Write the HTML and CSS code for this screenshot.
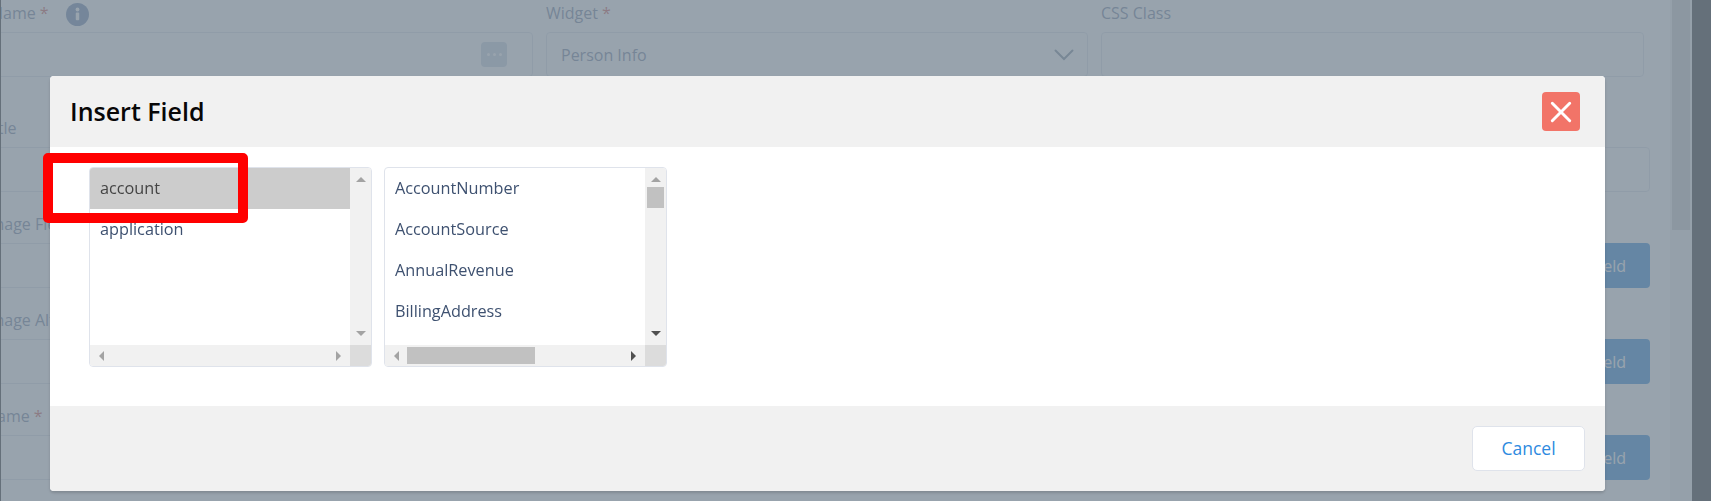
FILE: index.html
```html
<!DOCTYPE html>
<html lang="en">
<head>
    <meta charset="UTF-8">
    <meta name="viewport" content="width=device-width, initial-scale=1.0">
    <title>Insert Field</title>
    <link rel="stylesheet" href="styles.css">
</head>
<body>
    <div class="page">
        <!-- form behind the dialog -->
        <div class="form">
            <div class="top-row">
                <div class="field">
                    <div class="label">Name <span class="req">*</span>
                        <svg class="info" viewBox="0 0 24 24"><circle cx="12" cy="12" r="12" fill="#4f6f9f"/><rect x="10.2" y="10" width="3.6" height="8" rx="1" fill="#fff"/><circle cx="12" cy="6.8" r="2" fill="#fff"/></svg>
                    </div>
                    <div class="input">
                        <span class="more"><i></i><i></i><i></i></span>
                    </div>
                </div>
                <div class="field">
                    <div class="label">Widget <span class="req">*</span></div>
                    <div class="input">
                        <span class="value">Person Info</span>
                        <svg class="chevron" viewBox="0 0 20 12"><path d="M1.5 1.5 L10 10 L18.5 1.5" fill="none" stroke="#5f7389" stroke-width="2" stroke-linecap="round"/></svg>
                    </div>
                </div>
                <div class="field">
                    <div class="label">CSS Class</div>
                    <div class="input"></div>
                </div>
            </div>
            <div class="rows">
                <div class="row">
                    <div class="label">Title</div>
                    <div class="input"></div>
                </div>
                <div class="row">
                    <div class="label">Image Field</div>
                    <div class="input-line">
                        <div class="input"></div>
                        <button class="blue-btn">Insert Field</button>
                    </div>
                </div>
                <div class="row">
                    <div class="label">Image Alt</div>
                    <div class="input-line">
                        <div class="input"></div>
                        <button class="blue-btn">Insert Field</button>
                    </div>
                </div>
                <div class="row">
                    <div class="label">Name <span class="req">*</span></div>
                    <div class="input-line">
                        <div class="input"></div>
                        <button class="blue-btn">Insert Field</button>
                    </div>
                </div>
            </div>
        </div>
        <div class="page-scroll"><div class="page-thumb"></div></div>
        <div class="page-edge"></div>
    </div>

    <div class="backdrop"></div>

    <!-- dialog -->
    <div class="modal">
        <div class="modal-head">
            <h2 class="modal-title">Insert Field</h2>
            <button class="close-btn">
                <svg viewBox="0 0 24 24"><path d="M2.5 2.5 L21.5 21.5 M21.5 2.5 L2.5 21.5" fill="none" stroke="#fff" stroke-width="3.2" stroke-linecap="round"/></svg>
            </button>
        </div>
        <div class="modal-body">
            <div class="list">
                <div class="list-items">
                    <div class="item selected">account</div>
                    <div class="item">application</div>
                </div>
                <div class="vbar">
                    <span class="arrow up off"></span>
                    <span class="arrow down off"></span>
                </div>
                <div class="hbar">
                    <span class="arrow left off"></span>
                    <span class="arrow right off"></span>
                </div>
                <div class="corner"></div>
            </div>
            <div class="list">
                <div class="list-items">
                    <div class="item">AccountNumber</div>
                    <div class="item">AccountSource</div>
                    <div class="item">AnnualRevenue</div>
                    <div class="item">BillingAddress</div>
                </div>
                <div class="vbar">
                    <span class="arrow up off"></span>
                    <span class="vthumb"></span>
                    <span class="arrow down"></span>
                </div>
                <div class="hbar">
                    <span class="arrow left off"></span>
                    <span class="hthumb"></span>
                    <span class="arrow right"></span>
                </div>
                <div class="corner"></div>
            </div>
        </div>
        <div class="modal-foot">
            <button class="cancel-btn">Cancel</button>
        </div>
    </div>

    <!-- red annotation round the first row -->
    <div class="marker"></div>
</body>
</html>
```

FILE: styles.css
```css
* {
    margin: 0;
    padding: 0;
    box-sizing: border-box;
    font-family: "Open Sans", "Noto Sans", sans-serif;
}
body {
    width: 1711px;
    height: 501px;
    background: white;
    overflow: hidden;
}
.page {
    display: flex;
    height: 501px;
    border-left: 1px solid black;
    overflow: hidden;
}
.form {
    flex: 1;
    min-width: 0;
    padding-top: 3px;
    overflow: hidden;
}
.top-row {
    display: grid;
    grid-template-columns: 542px 542px 543px;
    gap: 13px;
    margin-left: -10px;
}
.rows {
    display: flex;
    flex-direction: column;
    gap: 22px;
    margin: 41px 20px 0 -16px;
}
.label {
    display: flex;
    align-items: center;
    gap: 4px;
    height: 20px;
    margin-bottom: 9px;
    font-size: 16px;
    line-height: 20px;
    color: #54698d;
}
.req {
    color: #c23934;
}
.info {
    width: 23px;
    height: 23px;
    margin-left: 13px;
    position: relative;
    top: 1px;
}
.input {
    display: flex;
    align-items: center;
    justify-content: space-between;
    flex: 1;
    height: 45px;
    padding: 0 14px;
    border: 1px solid #d8dde6;
    border-radius: 4px;
}
.value {
    font-size: 16px;
    color: #54698d;
}
.chevron {
    width: 20px;
    height: 12px;
    margin: 0 -1px 0 auto;
}
.more {
    display: flex;
    align-items: center;
    justify-content: center;
    gap: 3px;
    width: 26px;
    height: 25px;
    margin-left: auto;
    margin-right: 11px;
    background: #bccadb;
    border-radius: 4px;
}
.more i {
    width: 3px;
    height: 3px;
    background: white;
    border-radius: 50%;
}
.input-line {
    display: flex;
}
.blue-btn {
    width: 140px;
    height: 45px;
    padding-right: 24px;
    text-align: right;
    font-size: 16px;
    color: white;
    background: #0070d2;
    border: none;
    border-radius: 4px;
}
.page-scroll {
    width: 22px;
    padding: 0 2px;
    background: #f1f1f1;
}
.page-thumb {
    height: 230px;
    background: #c1c1c1;
}
.page-edge {
    width: 19px;
    background: black;
}
.backdrop {
    position: fixed;
    top: 0;
    left: 0;
    width: 100%;
    height: 100%;
    background: rgba(126, 140, 153, 0.8);
}
/* dialog */
.modal {
    position: fixed;
    top: 76px;
    left: 50px;
    width: 1555px;
    height: 415px;
    display: flex;
    flex-direction: column;
    background: white;
    border-radius: 4px;
    box-shadow: 0 2px 3px rgba(0, 0, 0, 0.16);
    overflow: hidden;
}
.modal-head {
    display: flex;
    align-items: center;
    justify-content: space-between;
    height: 71px;
    padding: 0 25px 0 20px;
    background: #f1f1f1;
}
.modal-title {
    margin-bottom: 2px;
    font-size: 25px;
    font-weight: 600;
    color: #080707;
}
.close-btn {
    display: flex;
    align-items: center;
    justify-content: center;
    width: 38px;
    height: 39px;
    background: #f27468;
    border: none;
    border-radius: 4px;
}
.close-btn svg {
    width: 22px;
    height: 22px;
}
.modal-body {
    flex: 1;
    display: flex;
    gap: 12px;
    padding: 20px 39px;
}
.list {
    display: grid;
    grid-template-columns: 1fr 21px;
    grid-template-rows: 1fr 21px;
    width: 283px;
    height: 200px;
    border: 1px solid #dfe3eb;
    border-radius: 4px;
    overflow: hidden;
}
.list-items {
    overflow: hidden;
}
.item {
    height: 41px;
    padding-left: 10px;
    font-size: 16.25px;
    line-height: 41px;
    color: #3e5170;
}
.item.selected {
    background: #cccccc;
    color: #444;
}
.vbar {
    display: flex;
    flex-direction: column;
    align-items: center;
    padding: 9px 0;
    background: #f1f1f1;
}
.vbar .down {
    margin-top: auto;
}
.vthumb {
    width: 17px;
    height: 21px;
    margin-top: 5px;
    background: #c1c1c1;
}
.hbar {
    display: flex;
    align-items: center;
    padding: 0 9px;
    background: #f1f1f1;
}
.hbar .right {
    margin-left: auto;
}
.hthumb {
    width: 128px;
    height: 17px;
    margin-left: 8px;
    background: #c1c1c1;
}
.corner {
    background: #dcdcdc;
}
/* css triangles for the scroll arrows */
.arrow {
    display: block;
    width: 0;
    height: 0;
    flex: none;
    --c: #505050;
}
.arrow.off {
    --c: #a3a3a3;
}
.arrow.up {
    border-left: 5px solid transparent;
    border-right: 5px solid transparent;
    border-bottom: 5px solid var(--c);
}
.arrow.down {
    border-left: 5px solid transparent;
    border-right: 5px solid transparent;
    border-top: 5px solid var(--c);
}
.arrow.left {
    border-top: 5px solid transparent;
    border-bottom: 5px solid transparent;
    border-right: 5px solid var(--c);
}
.arrow.right {
    border-top: 5px solid transparent;
    border-bottom: 5px solid transparent;
    border-left: 5px solid var(--c);
}
.modal-foot {
    display: flex;
    align-items: center;
    justify-content: flex-end;
    height: 85px;
    padding: 0 20px 0 0;
    background: #f1f1f1;
}
.cancel-btn {
    width: 113px;
    height: 45px;
    padding-bottom: 2px;
    font-size: 17.5px;
    color: #2e8ae0;
    background: white;
    border: 1px solid #dfe3eb;
    border-radius: 5px;
}
.marker {
    position: fixed;
    top: 153px;
    left: 43px;
    width: 205px;
    height: 70px;
    border: 10px solid #ff0000;
    border-radius: 5px;
}
```
